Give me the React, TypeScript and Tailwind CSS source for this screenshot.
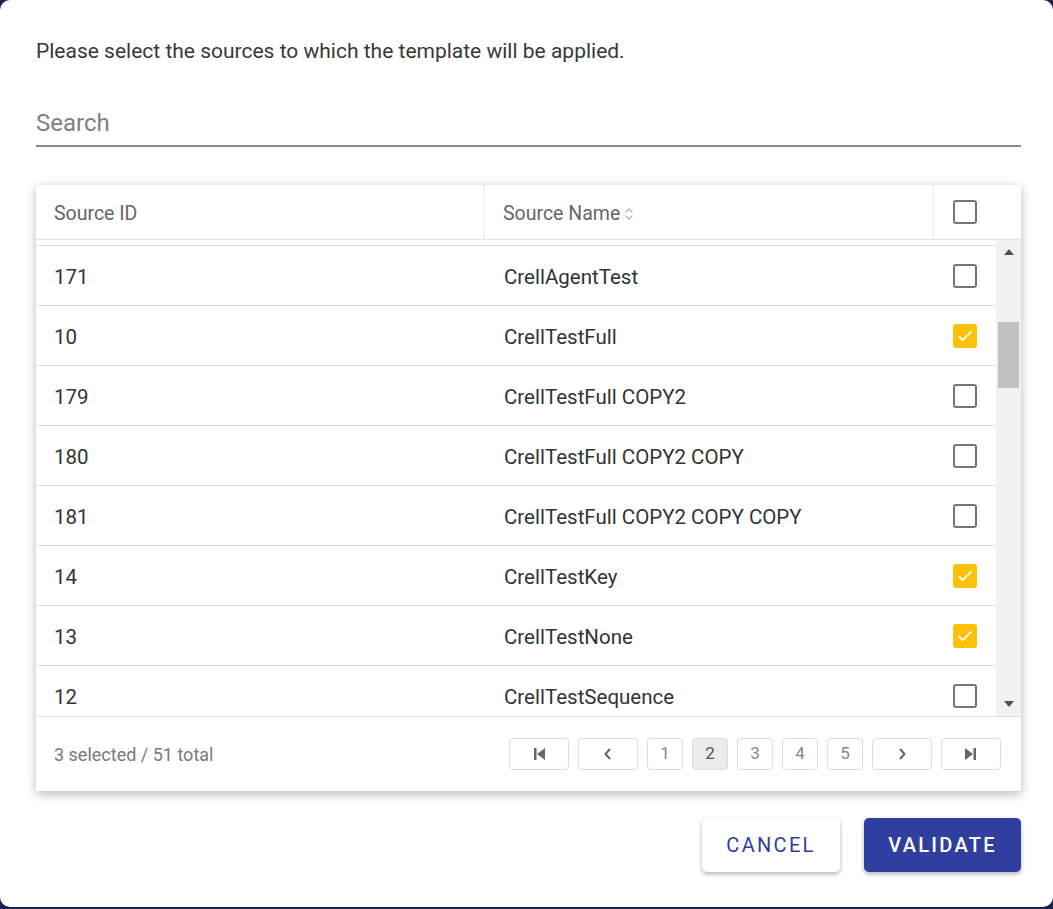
import React from "react";

const rows: { id: string; name: string; checked: boolean }[] = [
  { id: "171", name: "CrellAgentTest", checked: false },
  { id: "10", name: "CrellTestFull", checked: true },
  { id: "179", name: "CrellTestFull COPY2", checked: false },
  { id: "180", name: "CrellTestFull COPY2 COPY", checked: false },
  { id: "181", name: "CrellTestFull COPY2 COPY COPY", checked: false },
  { id: "14", name: "CrellTestKey", checked: true },
  { id: "13", name: "CrellTestNone", checked: true },
  { id: "12", name: "CrellTestSequence", checked: false },
];

function Checkbox({ checked }: { checked: boolean }) {
  if (checked) {
    return (
      <div className="w-[24px] h-[24px] rounded-[3px] bg-[#ffc107] flex items-center justify-center">
        <svg width="18" height="18" viewBox="0 0 24 24" fill="none">
          <path d="M4 12.5l5 5L20 6.5" stroke="#fff" strokeWidth="2.4" strokeLinecap="round" strokeLinejoin="round" />
        </svg>
      </div>
    );
  }
  return <div className="w-[24px] h-[24px] rounded-[3px] border-[2px] border-[#767676] bg-white" />;
}

function PageBtn({ children, wide, active }: { children: React.ReactNode; wide?: boolean; active?: boolean }) {
  return (
    <div
      className={`h-[32px] ${wide ? "w-[60px]" : "w-[36px]"} rounded-[4px] border border-[#dcdcdc] flex items-center justify-center text-[17px] ${
        active ? "bg-[#ececec] text-[#555]" : "bg-white text-[#888]"
      }`}
    >
      {children}
    </div>
  );
}

export default function App() {
  return (
    <div className="w-[1053px] h-[909px] bg-[#1b2150]" style={{ fontFamily: "Roboto, 'Noto Sans', sans-serif" }}>
      <div className="w-[1053px] h-[907px] bg-white rounded-[10px] pl-[36px] pr-[32px] pt-[37px] flex flex-col">
        <p className="text-[21px] leading-[28px] text-[#383838]">Please select the sources to which the template will be applied.</p>

        <div className="mt-[44px] border-b-[2px] border-[#8a8a8a] h-[38px] flex items-start">
          <span className="text-[24px] leading-[28px] text-[#808080]">Search</span>
        </div>

        <div className="mt-[38px] bg-white shadow-[0_3px_10px_rgba(0,0,0,0.28)] flex flex-col">
          <div className="flex h-[55px] border-b border-[#e2e2e2] text-[19.5px] text-[#666]">
            <div className="w-[448px] flex items-center pl-[18px] pt-[4px] border-r border-[#ececec]">Source ID</div>
            <div className="w-[450px] flex items-center pl-[19px] pt-[4px] border-r border-[#ececec]">
              Source Name
              <svg className="ml-[4px]" width="10" height="16" viewBox="0 0 10 16" fill="none">
                <path d="M2 6l3-3 3 3M2 10l3 3 3-3" stroke="#b5b5b5" strokeWidth="1.3" strokeLinecap="round" strokeLinejoin="round" />
              </svg>
            </div>
            <div className="flex-1 flex items-center pl-[19px]">
              <Checkbox checked={false} />
            </div>
          </div>

          <div className="flex h-[476px]">
            <div className="flex-1 overflow-hidden">
              <div className="h-[6px] border-b border-[#dedede]" />
              {rows.map((r) => (
                <div key={r.id} className="flex h-[60px] border-b border-[#dedede] text-[20.5px] text-[#333] shrink-0">
                  <div className="w-[448px] flex items-center pl-[18px] pt-[4px]">{r.id}</div>
                  <div className="w-[450px] flex items-center pl-[20px] pt-[4px]">{r.name}</div>
                  <div className="flex-1 flex items-center pl-[19px]">
                    <Checkbox checked={r.checked} />
                  </div>
                </div>
              ))}
            </div>
            <div className="w-[25px] bg-[#f1f1f1] flex flex-col items-center relative">
              <svg className="mt-[9px]" width="10" height="6" viewBox="0 0 10 6">
                <path d="M0 6L5 0L10 6Z" fill="#505050" />
              </svg>
              <div className="absolute left-[2px] right-[2px] top-[82px] h-[66px] bg-[#c1c1c1]" />
              <svg className="mt-auto mb-[9px]" width="10" height="6" viewBox="0 0 10 6">
                <path d="M0 0L5 6L10 0Z" fill="#505050" />
              </svg>
            </div>
          </div>

          <div className="h-[75px] border-t border-[#dedede] flex items-center pl-[18px] pr-[20px]">
            <span className="text-[18px] text-[#7a7a7a]">3 selected / 51 total</span>
            <div className="ml-auto flex gap-[9px]">
              <PageBtn wide>
                <svg width="16" height="14" viewBox="0 0 16 14">
                  <rect x="3" y="1" width="2.5" height="12" fill="#666" />
                  <path d="M14 1L6 7L14 13Z" fill="#666" />
                </svg>
              </PageBtn>
              <PageBtn wide>
                <svg width="12" height="14" viewBox="0 0 12 14" fill="none">
                  <path d="M8 2L3.5 7L8 12" stroke="#666" strokeWidth="2" />
                </svg>
              </PageBtn>
              <PageBtn>1</PageBtn>
              <PageBtn active>2</PageBtn>
              <PageBtn>3</PageBtn>
              <PageBtn>4</PageBtn>
              <PageBtn>5</PageBtn>
              <PageBtn wide>
                <svg width="12" height="14" viewBox="0 0 12 14" fill="none">
                  <path d="M4 2L8.5 7L4 12" stroke="#666" strokeWidth="2" />
                </svg>
              </PageBtn>
              <PageBtn wide>
                <svg width="16" height="14" viewBox="0 0 16 14">
                  <path d="M2 1L10 7L2 13Z" fill="#666" />
                  <rect x="10.5" y="1" width="2.5" height="12" fill="#666" />
                </svg>
              </PageBtn>
            </div>
          </div>
        </div>

        <div className="mt-[27px] flex justify-end gap-[24px]">
          <button className="w-[138px] h-[54px] rounded-[5px] bg-white shadow-[0_2px_4px_rgba(0,0,0,0.3)] text-[20px] tracking-[2.3px] text-[#303f9f]">
            CANCEL
          </button>
          <button className="w-[157px] h-[54px] rounded-[5px] bg-[#303f9f] shadow-[0_2px_4px_rgba(0,0,0,0.3)] text-[20px] tracking-[2.3px] font-medium text-white">
            VALIDATE
          </button>
        </div>
      </div>
    </div>
  );
}
